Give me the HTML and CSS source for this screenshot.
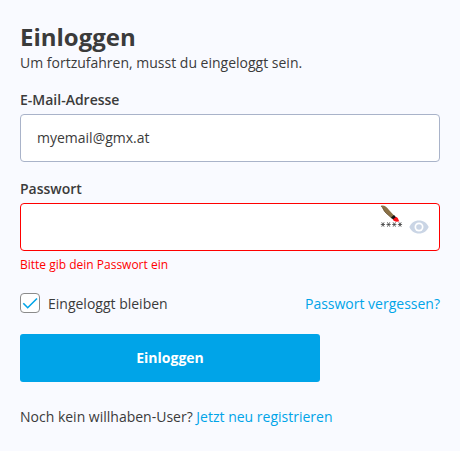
FILE: index.html
```html
<!DOCTYPE html>
<html lang="de">
<head>
<meta charset="utf-8">
<title>Einloggen</title>
<link rel="stylesheet" href="styles.css">
</head>
<body>
<main class="login">
  <h1 class="title">Einloggen</h1>
  <p class="intro">Um fortzufahren, musst du eingeloggt sein.</p>
  <div class="field">
    <div class="label">E-Mail-Adresse</div>
    <div class="input">myemail@gmx.at</div>
  </div>
  <div class="field field-password">
    <div class="label">Passwort</div>
    <div class="input input-error">
      <svg class="brush" width="24" height="24" viewBox="0 0 24 24">
        <path d="M1 .8C4 -.1 7 2.300 9 4.900L14.300 10.800 11.800 13.200 6 8.100C3.200 5.600 3.300 3.300 1 .8Z" fill="#8b7146"/>
        <path d="M1 1C3.500 3 3.200 5.500 6 8.100L11.800 13.200" fill="none" stroke="#5b4728" stroke-width=".7"/>
        <path d="M11 12.500 14 10 16.500 12.800 13.600 15Z" fill="#151010"/>
        <path d="M12.800 14.600 16 12C18.600 12.500 18 15 19.500 16.200 16.600 17.100 13.800 16.700 12.800 14.600Z" fill="#fb1018"/>
        <path d="M.8 19.500H5M1.700 17.300 4.100 21.700M4.100 17.300 1.700 21.700M6.500 19.500H10.700M7.400 17.300 9.800 21.700M9.800 17.300 7.400 21.700M12.200 19.500H16.400M13.100 17.300 15.500 21.700M15.500 17.300 13.100 21.700M17.900 19.500H22.100M18.800 17.300 21.200 21.700M21.200 17.300 18.800 21.700" stroke="#444" stroke-width=".8"/>
      </svg>
      <svg class="eye" width="20" height="14" viewBox="0 0 20 14">
        <path d="M10 .5C5.500 .5 1.800 3.200 .3 7 1.800 10.800 5.500 13.500 10 13.500S18.200 10.800 19.700 7C18.200 3.200 14.500 .5 10 .5Z" fill="#cad5e5"/>
        <circle cx="10" cy="7" r="4.500" fill="#fff"/>
        <circle cx="10" cy="7" r="2.800" fill="#cad5e5"/>
      </svg>
    </div>
    <div class="error">Bitte gib dein Passwort ein</div>
  </div>
  <div class="options">
    <div class="remember">
      <span class="checkbox"><svg width="18" height="18" viewBox="0 0 18 18"><path d="M2.300 9.200 6.700 13.700 16 4.500" fill="none" stroke="#00a4e8" stroke-width="1.600"/></svg></span>
      <span class="option-text">Eingeloggt bleiben</span>
    </div>
    <a class="link option-text">Passwort vergessen?</a>
  </div>
  <div class="button">Einloggen</div>
  <p class="register">Noch kein willhaben-User? <a class="link">Jetzt neu registrieren</a></p>
</main>
</body>
</html>
```
FILE: styles.css
```css
* { box-sizing: border-box; }
body {
  margin: 0;
  background: #f9faff;
  color: #3b3b3b;
  font: 14px/20px "Open Sans", sans-serif;
}
.login { height: 451px; padding: 21px 20px 0; }
.title { margin: 0; font-size: 24px; line-height: 32px; font-weight: 700; }
.intro { margin: 0 0 17px; }
.field { margin-bottom: 17px; }
.label { margin-bottom: 4px; font-weight: 600; }
.input {
  display: flex;
  align-items: center;
  height: 48px;
  padding: 0 16px;
  background: #fff;
  border: 1px solid #a9b3c9;
  border-radius: 4px;
}
.input-error {
  justify-content: flex-end;
  padding-right: 10px;
  border-color: #f00;
}
.brush { align-self: flex-start; margin: 1px 5px 0 0; }
.error { margin-top: 4px; color: #f00; font-size: 12px; line-height: 20px; }
.field-password { margin-bottom: 18px; }
.options { display: flex; align-items: center; justify-content: space-between; height: 20px; }
.remember { display: flex; align-items: center; gap: 8px; }
.option-text { padding-top: 2px; }
.checkbox {
  width: 20px;
  height: 20px;
  background: #fff;
  border: 1px solid #8b8b8b;
  border-radius: 4px;
}
.checkbox svg { display: block; }
.link { color: #00a4e8; }
.button {
  width: 300px;
  height: 48px;
  margin-top: 21px;
  border-radius: 3px;
  background: #00a4e8;
  color: #fff;
  font-weight: 700;
  line-height: 48px;
  text-align: center;
}
.register { margin: 25px 0 0; }
```
